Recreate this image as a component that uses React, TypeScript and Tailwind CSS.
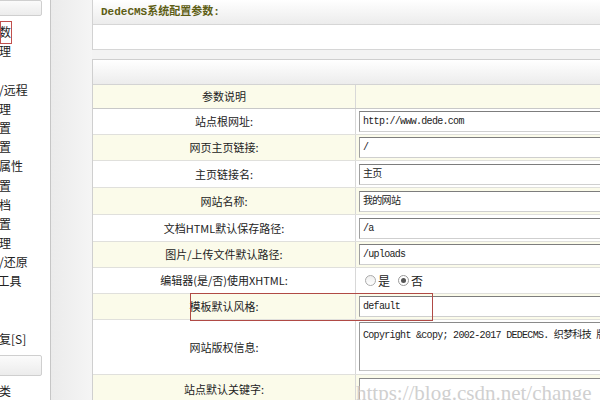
import React from 'react';

const cjk = "font-['Noto_Sans_CJK_SC','Noto_Sans',sans-serif]";
const mono = "font-['Liberation_Mono','Noto_Sans_CJK_SC',monospace]";

const menu = [
  '系统基本参数',
  '系统用户管理',
  '用户组设定',
  '服务器分布/远程',
  '系统日志管理',
  '验证安全设置',
  '图片水印设置',
  '自定义文档属性',
  '软件频道设置',
  '系统帮助文档',
  '随机模板设置',
  '计划任务管理',
  '数据库备份/还原',
  'SQL命令行工具',
  '病毒扫描',
  '文件校验',
  '系统错误修复[S]',
];

type Row = { label: string; h: string; bg: string; kind: 'input' | 'radio' | 'area' | 'kw'; value?: string };

const rows: Row[] = [
  { label: '站点根网址:', h: 'h-[26px]', bg: 'bg-white', kind: 'input', value: 'http://www.dede.com' },
  { label: '网页主页链接:', h: 'h-[26px]', bg: 'bg-[#fbfbea]', kind: 'input', value: '/' },
  { label: '主页链接名:', h: 'h-[27px]', bg: 'bg-white', kind: 'input', value: '主页' },
  { label: '网站名称:', h: 'h-[27px]', bg: 'bg-[#fbfbea]', kind: 'input', value: '我的网站' },
  { label: '文档HTML默认保存路径:', h: 'h-[27px]', bg: 'bg-white', kind: 'input', value: '/a' },
  { label: '图片/上传文件默认路径:', h: 'h-[26px]', bg: 'bg-[#fbfbea]', kind: 'input', value: '/uploads' },
  { label: '编辑器(是/否)使用XHTML:', h: 'h-[26px]', bg: 'bg-white', kind: 'radio' },
  { label: '模板默认风格:', h: 'h-[26px]', bg: 'bg-[#fbfbea]', kind: 'input', value: 'default' },
  { label: '网站版权信息:', h: 'h-[55px]', bg: 'bg-white', kind: 'area', value: 'Copyright &copy; 2002-2017 DEDECMS. 织梦科技 版权所有' },
  { label: '站点默认关键字:', h: 'h-[30px]', bg: 'bg-[#fbfbea]', kind: 'kw' },
];

function Field({ row }: { row: Row }) {
  if (row.kind === 'radio') {
    return (
      <div className={`flex items-center pl-[9px] text-[12px] text-[#222] ${cjk}`}>
        <span className="w-[11px] h-[11px] rounded-full border border-[#aaa] bg-gradient-to-b from-[#eee] to-white" />
        <span className="ml-[2px]">是</span>
        <span className="ml-[8px] w-[11px] h-[11px] rounded-full border border-[#999] bg-white flex items-center justify-center">
          <span className="w-[5px] h-[5px] rounded-full bg-[#555]" />
        </span>
        <span className="ml-[2px]">否</span>
      </div>
    );
  }
  if (row.kind === 'area') {
    return (
      <div className={`ml-[3px] mt-[2px] h-[49px] w-[300px] bg-white border border-[#c4c4c4] border-t-[#8a8a8a] border-l-[#9a9a9a] px-[3px] pt-[6px] text-[10px] tracking-[-0.7px] leading-[14px] text-[#222] whitespace-nowrap ${mono}`}>
        {row.value}
      </div>
    );
  }
  if (row.kind === 'kw') {
    return (
      <div className="relative ml-[3px] mt-[3px] h-[24px] w-[300px] bg-white border border-[#c4c4c4] border-t-[#8a8a8a] border-l-[#9a9a9a]">
        <span className="absolute left-[-4px] top-[-1px] text-[21px] text-[#d0d0d0] whitespace-nowrap font-['Liberation_Serif',serif]">
          https://blog.csdn.net/change_any_time
        </span>
      </div>
    );
  }
  return (
    <div className={`ml-[3px] h-[21px] w-[300px] flex items-center bg-white border border-[#cfcfcf] border-t-[#7d7d7d] border-l-[#a0a0a0] px-[3px] text-[10px] tracking-[-0.7px] text-[#222] whitespace-nowrap ${mono}`}>
      {row.value}
    </div>
  );
}

export default function App() {
  return (
    <div className={`relative w-[600px] h-[400px] overflow-hidden flex bg-white ${cjk}`}>
      {/* left menu, scrolled off to the left */}
      <div className="w-[51px] shrink-0 border-r border-[#c6c6c6] bg-white overflow-hidden">
        <div className="h-[16px] w-[44px] ml-[-2px] border border-[#cfcfcf] rounded-[2px] bg-gradient-to-b from-[#fbfbfb] to-[#ececec]" />
        <div className="ml-[-61px] mt-[6px] flex flex-col">
          {menu.map((m) => (
            <div key={m} className="h-[19.2px] leading-[19px] text-[12px] text-[#222] whitespace-nowrap">
              {m}
            </div>
          ))}
        </div>
        <div className="mt-[7px] h-[21px] w-[44px] ml-[-2px] border border-[#cfcfcf] rounded-[2px] bg-gradient-to-b from-[#fbfbfb] to-[#ececec]" />
        <div className="ml-[-61px] mt-[5px] h-[19px] leading-[19px] text-[12px] text-[#222] whitespace-nowrap">点卡产品分类</div>
      </div>

      {/* gap */}
      <div className="w-[41px] shrink-0 bg-gradient-to-r from-[#ebebeb] to-[#f5f5f5]" />

      {/* main */}
      <div className="flex-1 bg-[#f3f3f3] flex flex-col">
        <div className="shrink-0 border-l border-[#d2d2d2] bg-white">
          <div className="h-[25px] border-b border-[#d6d6d6] bg-gradient-to-b from-white to-[#ececec] flex items-center pl-[8px]">
            <span className={`text-[11px] font-bold text-[#5e5e14] ${mono}`}>DedeCMS系统配置参数:</span>
          </div>
          <div className="h-[25px] border-b border-[#d6d6d6] flex items-center justify-end pr-[4px] text-[11px] text-[#222]">
            站点设置
          </div>
        </div>
        <div className="h-[9px] shrink-0" />
        <div className="shrink-0 border-l border-t border-[#cfcfcf] bg-white">
          <div className="h-[25px] border-b border-[#d3d3d3] bg-gradient-to-b from-white to-[#ececec]" />
          <div className="h-[24px] flex bg-[#fbfbea] border-b border-[#c8c8c8]">
            <div className="w-[263px] border-r border-[#d8d8d8] flex items-center justify-center text-[11px] text-[#222]">参数说明</div>
            <div className="flex-1" />
          </div>
          {rows.map((r) => (
            <div key={r.label} className={`${r.h} ${r.bg} flex border-b border-[#e0e0dc]`}>
              <div className="w-[263px] shrink-0 border-r border-[#d8d8d8] flex items-center justify-center text-[11px] text-[#222] whitespace-nowrap">
                {r.label}
              </div>
              <div className="flex-1 flex items-center">
                {r.kind === 'area' || r.kind === 'kw' ? (
                  <div className="self-start">
                    <Field row={r} />
                  </div>
                ) : (
                  <Field row={r} />
                )}
              </div>
            </div>
          ))}
        </div>
      </div>

      {/* annotation boxes */}
      <div className="absolute left-0 top-[21px] w-[12px] h-[23px] border border-[#c0504d]" />
      <div className="absolute left-[190px] top-[293px] w-[243px] h-[28px] border border-[#b04a45]" />
    </div>
  );
}
